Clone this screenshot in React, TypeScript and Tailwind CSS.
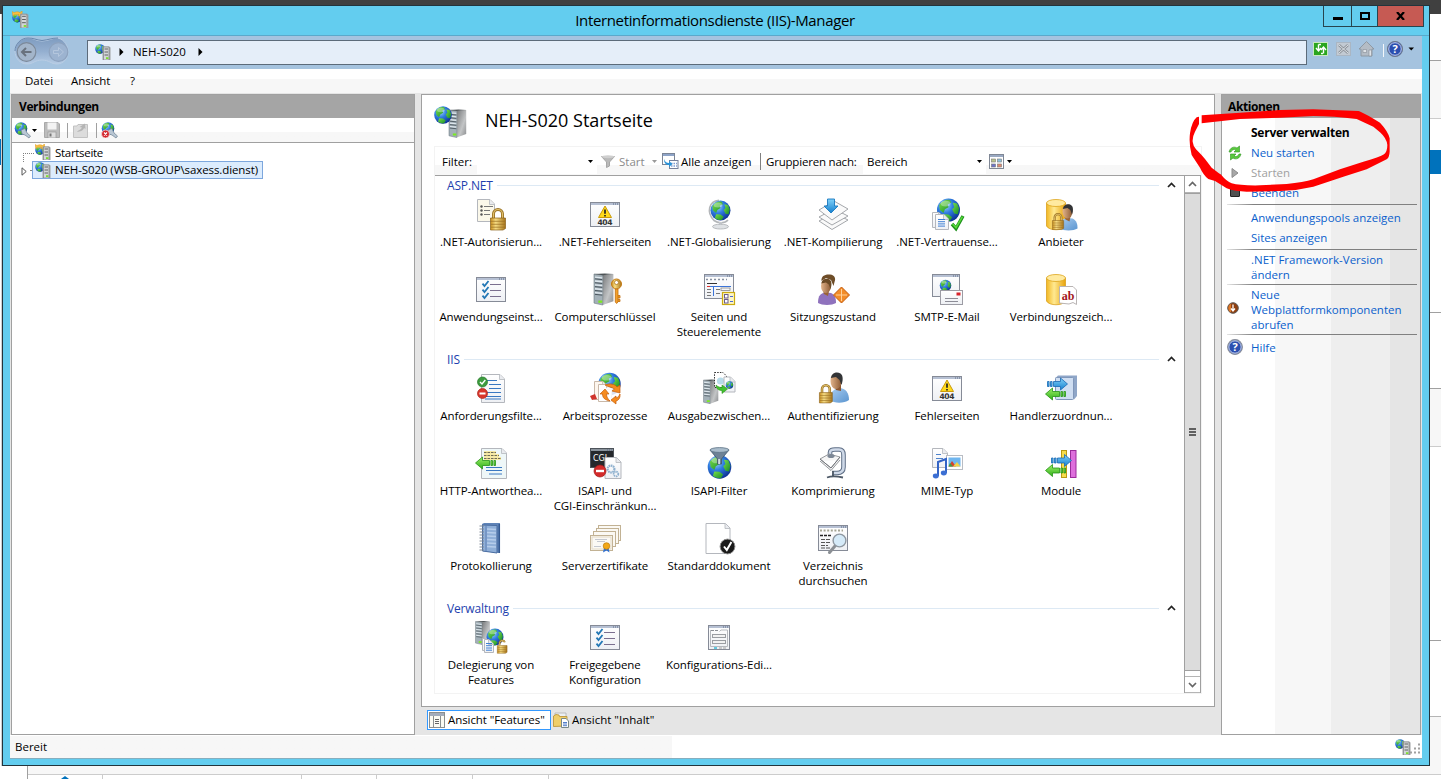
import React from "react";

type P = { x: number; y: number };

/* ---------- drawing primitives ---------- */

const Defs = () => (
  <svg width="0" height="0" className="absolute">
    <defs>
      <radialGradient id="globe" cx="0.35" cy="0.3" r="0.75">
        <stop offset="0" stopColor="#a5dcfd" />
        <stop offset="0.45" stopColor="#2f7ce0" />
        <stop offset="1" stopColor="#0c2f93" />
      </radialGradient>
      <linearGradient id="land" x1="0" y1="0" x2="1" y2="1">
        <stop offset="0" stopColor="#7be04b" />
        <stop offset="1" stopColor="#168a2a" />
      </linearGradient>
      <linearGradient id="side" x1="0" y1="0" x2="1" y2="1">
        <stop offset="0" stopColor="#77797b" />
        <stop offset="0.6" stopColor="#c3c5c6" />
        <stop offset="1" stopColor="#8b8d8f" />
      </linearGradient>
      <linearGradient id="gold" x1="0" y1="0" x2="1" y2="0">
        <stop offset="0" stopColor="#c98f1e" />
        <stop offset="0.35" stopColor="#f6dc83" />
        <stop offset="1" stopColor="#a8741a" />
      </linearGradient>
      <linearGradient id="db" x1="0" y1="0" x2="1" y2="0">
        <stop offset="0" stopColor="#f2b722" />
        <stop offset="0.4" stopColor="#ffe991" />
        <stop offset="1" stopColor="#e8a30c" />
      </linearGradient>
      <linearGradient id="paper" x1="0" y1="0" x2="0" y2="1">
        <stop offset="0" stopColor="#ffffff" />
        <stop offset="1" stopColor="#eef0f4" />
      </linearGradient>
      <linearGradient id="blueArrow" x1="0" y1="0" x2="0" y2="1">
        <stop offset="0" stopColor="#7fd0f8" />
        <stop offset="1" stopColor="#1580cf" />
      </linearGradient>
      <linearGradient id="greenArrow" x1="0" y1="0" x2="0" y2="1">
        <stop offset="0" stopColor="#9df06a" />
        <stop offset="1" stopColor="#2fae17" />
      </linearGradient>
      <linearGradient id="skin" x1="0" y1="0" x2="1" y2="0">
        <stop offset="0" stopColor="#e2b48b" />
        <stop offset="1" stopColor="#8c5a33" />
      </linearGradient>
      <linearGradient id="shirt" x1="0" y1="0" x2="1" y2="1">
        <stop offset="0" stopColor="#a9cdf0" />
        <stop offset="1" stopColor="#5b95d0" />
      </linearGradient>
      <linearGradient id="navShell" x1="0" y1="0" x2="0" y2="1">
        <stop offset="0" stopColor="#7f9cc0" />
        <stop offset="0.5" stopColor="#93aecf" />
        <stop offset="1" stopColor="#b5cbe4" />
      </linearGradient>
    </defs>
  </svg>
);

const Globe = ({ x, y, r }: P & { r: number }) => (
  <g transform={`translate(${x} ${y}) scale(${r / 8})`}>
    <circle r="8" fill="url(#globe)" />
    <path d="M-6.5 -3.5C-4 -7 -1 -7.5 1 -7L2 -5L-0.5 -4L0 -2L-2.5 -0.5L-3.5 2L-6 0Z" fill="url(#land)" />
    <path d="M3 -5L6 -4.5L7.4 -1L6.5 3L4 2.5L2.5 -0.5L4 -2Z" fill="url(#land)" />
    <path d="M-3.5 3L0 3.2L2.5 5L1 7.6C-1 8 -3.5 7 -4.5 6Z" fill="url(#land)" />
    <ellipse cx="-2" cy="-4.5" rx="3.5" ry="2" fill="#fff" opacity="0.35" />
  </g>
);

const Tower = ({ x, y, s = 1 }: P & { s?: number }) => (
  <g transform={`translate(${x} ${y}) scale(${s})`}>
    <path d="M9 1L20 0V28L9 32Z" fill="url(#side)" />
    <path d="M0 0L9 1V32L0 30Z" fill="#a3b0b8" stroke="#65727a" strokeWidth="0.6" />
    <path d="M0 0L11 -0.6L20 0L9 1.2Z" fill="#4d5356" />
    <path d="M1 3.2L8.5 4M1 7.2L8.5 8M1 11.2L8.5 12M1 15.2L8.5 16M1 19.2L8.5 20" stroke="#dfe8ee" strokeWidth="1.4" />
    <path d="M1 5L8.5 5.8M1 9L8.5 9.8M1 13L8.5 13.8M1 17L8.5 17.8M1 21L8.5 21.8" stroke="#47535b" strokeWidth="1" />
    <rect x="4.5" y="27.3" width="4" height="2.4" fill="#7bea22" />
  </g>
);

const Lock = ({ x, y, s = 1, open = false }: P & { s?: number; open?: boolean }) => (
  <g transform={`translate(${x} ${y}) scale(${s})`}>
    <path
      d={open ? "M4 9V5.5A4.2 4.2 0 0 1 12 5" : "M3.5 11V6A4.5 4.5 0 0 1 12.5 6V11"}
      fill="none"
      stroke="#9b7426"
      strokeWidth="3"
    />
    <path
      d={open ? "M4 9V5.5A4.2 4.2 0 0 1 12 5" : "M3.5 11V6A4.5 4.5 0 0 1 12.5 6V11"}
      fill="none"
      stroke="#e3c26c"
      strokeWidth="1.2"
    />
    <path d="M0.5 10H15.5V20.5L13 22H0.5Z" fill="url(#gold)" stroke="#8a611b" strokeWidth="0.7" />
    <path d="M1 13.3H15M1 16.3H15M1 19.2H15" stroke="#9a6f22" strokeWidth="0.7" />
  </g>
);

const Doc = ({
  x,
  y,
  w,
  h,
  fill = "url(#paper)",
  stroke = "#b4b7bd",
}: P & { w: number; h: number; fill?: string; stroke?: string }) => (
  <g transform={`translate(${x} ${y})`}>
    <path
      d={`M0.5 0.5H${w - 5}L${w - 0.5} 5V${h - 0.5}H0.5Z`}
      fill={fill}
      stroke={stroke}
    />
    <path d={`M${w - 5.5} 0.5V5.5H${w - 0.5}`} fill="#e9ebef" stroke={stroke} strokeWidth="0.8" />
  </g>
);

const Win = ({ x, y, w, h, dark = false }: P & { w: number; h: number; dark?: boolean }) => (
  <g transform={`translate(${x} ${y})`}>
    <rect x="0.5" y="0.5" width={w - 1} height={h - 1} fill={dark ? "#25282c" : "url(#paper)"} stroke={dark ? "#4d535a" : "#868b97"} />
    <rect x="1" y="1" width={w - 2} height="2" fill={dark ? "#8a939c" : "#b6c0d3"} />
    <path d={`M${w - 7} 2H${w - 2}`} stroke="#5d6a82" strokeDasharray="1 1" />
  </g>
);

const Person = ({ x, y, body = "url(#shirt)", hair = "#333436" }: P & { body?: string; hair?: string }) => (
  <g transform={`translate(${x} ${y})`}>
    <path d="M0 25C0 17 3 15 8 14.5L13 15C17 17 18 20 18 25C14 27.5 4 27.5 0 25Z" fill={body} />
    <path d="M5 13L11 13L10 18L6 16Z" fill="#9a6336" />
    <ellipse cx="8" cy="8" rx="5" ry="7" fill="url(#skin)" />
    <path d="M3.3 5.5C4 1 8 0 11 1.2C14 2.5 14 7 12.5 11L10.8 6.5L8 4.5Z" fill={hair} />
  </g>
);

const Db = ({ x, y }: P) => (
  <g transform={`translate(${x} ${y})`}>
    <path d="M0.5 4V27C3 32 17 32 19.5 27V4Z" fill="url(#db)" stroke="#d69a12" strokeWidth="0.7" />
    <ellipse cx="10" cy="4" rx="9.5" ry="3.5" fill="#ffeaa0" stroke="#dda41c" strokeWidth="0.8" />
  </g>
);

const RightArrow = ({ x, y }: P) => (
  <path
    transform={`translate(${x} ${y})`}
    d="M0 3.5H1.6V8.5H0ZM3 3.5H4.6V8.5H3ZM6 3.5H13V0L20 6L13 12V8.5H6Z"
    fill="url(#blueArrow)"
    stroke="#1668b4"
    strokeWidth="0.8"
  />
);

const LeftArrow = ({ x, y }: P) => (
  <path
    transform={`translate(${x} ${y})`}
    d="M20 3.5H18.4V8.5H20ZM17 3.5H15.4V8.5H17ZM14 3.5H7V0L0 6L7 12V8.5H14Z"
    fill="url(#greenArrow)"
    stroke="#249315"
    strokeWidth="0.8"
  />
);

const Glyph = ({ children }: { children: React.ReactNode }) => (
  <svg width="32" height="32" viewBox="0 0 32 32" className="block shrink-0 overflow-visible">
    {children}
  </svg>
);

const Error404 = () => (
  <Glyph>
    <Win x={1} y={4} w={30} h={25} />
    <path d="M16 8L22.5 19.5H9.5Z" fill="#ffd91a" stroke="#c99a0a" strokeLinejoin="round" />
    <path d="M16 11.5V15.8M16 17V18.4" stroke="#222" strokeWidth="1.7" />
    <text x="16" y="27.2" textAnchor="middle" fontSize="7.6" fontWeight="700" fontFamily="DejaVu Sans, sans-serif" fill="#333" textLength="15">
      404
    </text>
  </Glyph>
);

const CheckList = () => (
  <Glyph>
    <Win x={1} y={4} w={30} h={25} />
    {[9, 15, 21].map((y) => (
      <g key={y}>
        <path d={`M7.5 ${y + 1.6}L9.5 ${y + 4}L13.5 ${y - 1}`} fill="none" stroke="#2277b5" strokeWidth="1.8" />
        <path d={`M15 ${y + 2.5}H26`} stroke="#7a6f8f" strokeWidth="1" />
      </g>
    ))}
  </Glyph>
);

const icons: Record<string, React.ReactNode> = {
  auth: (
    <Glyph>
      <Doc x={2} y={1} w={18} h={23} fill="#fbf8ea" />
      {[8.5, 12.5, 16.5].map((y) => (
        <g key={y}>
          <circle cx="6.5" cy={y} r="1.2" fill="#555" />
          <path d={`M9 ${y}H${y > 9 ? 15 : 18}`} stroke="#777" />
        </g>
      ))}
      <Lock x={15} y={10} />
    </Glyph>
  ),
  e404: <Error404 />,
  globeStand: (
    <Glyph>
      <path d="M16 2.2C6 3 3 14 11 22.5C15 25.5 22 25.5 25 22" fill="none" stroke="#b3b6b9" strokeWidth="1.6" />
      <Globe x={17.5} y={12.5} r={10} />
      <path d="M16 24H19V28H16Z" fill="#c6c9cc" />
      <ellipse cx="17.5" cy="28.6" rx="8" ry="2.4" fill="#dfe2e5" stroke="#a9adb1" strokeWidth="0.8" />
    </Glyph>
  ),
  compile: (
    <Glyph>
      <g fill="#fafafa" stroke="#9a9da1" strokeWidth="0.9">
        <path d="M2 23L17 15L31 22L15 31.5Z" />
        <path d="M2 19L17 11L31 18L15 27Z" />
        <path d="M2 12L17 3L31 11L15 22Z" />
      </g>
      <path d="M10.5 1H17.5V8H21L14 15L7 8H10.5Z" fill="url(#blueArrow)" stroke="#1a79c0" strokeWidth="0.9" />
    </Glyph>
  ),
  trust: (
    <Glyph>
      <Globe x={17.5} y={12} r={11.5} />
      <Doc x={1} y={14} w={12} h={16} />
      <Doc x={4} y={16} w={14} h={16} />
      <path d="M7 21.5H14M7 23.7H14M7 25.9H14M7 28.1H14" stroke="#3f7fd4" />
      <path d="M21 26L25 30.5L32 18" fill="none" stroke="#1d8f1a" strokeWidth="3.4" />
      <path d="M21.5 26L25 29.6L31.5 18.6" fill="none" stroke="#57d93c" strokeWidth="1.6" />
    </Glyph>
  ),
  provider: (
    <Glyph>
      <Db x={1} y={1} />
      <Person x={14.5} y={5.5} />
      <Lock x={7} y={15} s={0.75} />
    </Glyph>
  ),
  settings: <CheckList />,
  machineKey: (
    <Glyph>
      <Tower x={5} y={1} s={0.97} />
      <circle cx="27.5" cy="11" r="5" fill="url(#gold)" stroke="#c67a12" />
      <circle cx="27.5" cy="9.5" r="2" fill="#fff" stroke="#a86b10" strokeWidth="0.7" />
      <path d="M26.3 16H29V29L27.6 30.5L26.3 29Z M29 22.5H31V25H29M29 26.5H31V28.5H29" fill="#f2a12c" stroke="#c06c0c" strokeWidth="0.8" />
    </Glyph>
  ),
  pages: (
    <Glyph>
      <Win x={1} y={1} w={30} h={25} />
      <path d="M3 6.5H24" stroke="#8790a0" strokeWidth="1.6" strokeDasharray="2 2" />
      <path d="M4 10.5H14" stroke="#333" />
      <path d="M4 13.5H15" stroke="#e03030" />
      <path d="M7 13.5H28M10.5 14V23" stroke="#3c74d8" />
      <path d="M4 16.5H8M4 19.5H8M4 22.5H8M13 16.5H17M13 20.5H17" stroke="#777" />
      <rect x="18" y="15" width="9" height="2.5" fill="none" stroke="#888" strokeWidth="0.8" />
      <rect x="19.5" y="19.5" width="12" height="12" fill="#fdf6c6" stroke="#cbaa10" strokeWidth="1.2" />
      <rect x="21.5" y="21.5" width="3.5" height="3.5" fill="#fff" stroke="#6a5b8f" />
      <rect x="21.5" y="26.5" width="3.5" height="3.5" fill="#fff" stroke="#6a5b8f" />
      <path d="M27 23.5H30M27 28.5H30" stroke="#4b6ad0" />
    </Glyph>
  ),
  session: (
    <Glyph>
      <Person x={1} y={5} body="#8f72bd" hair="#6a4a25" />
      <path d="M4.5 8C4 3 8 1 13 1.5C18 2 19 6 17.5 9L16.5 13L14 7L9 5Z" fill="#6e4d28" />
      <path d="M24.5 14L32.5 22L24.5 30L16.5 22Z" fill="#f28c28" stroke="#c45a0c" />
      <path d="M24.5 16V28M19 22H30" stroke="#ffd09a" />
    </Glyph>
  ),
  smtp: (
    <Glyph>
      <Win x={1} y={1} w={28} h={23} />
      <Globe x={14.5} y={12.5} r={5.8} />
      <rect x="9.5" y="17.5" width="22" height="14" fill="url(#paper)" stroke="#9c9ca4" />
      <rect x="25.5" y="19.5" width="4" height="3" fill="#d8232a" />
      <path d="M14 25.5H27M14 28.5H27" stroke="#8d8d97" />
    </Glyph>
  ),
  connStr: (
    <Glyph>
      <Db x={1} y={1} />
      <path d="M14.5 13.5H28L31.5 17V31.5L28 29.5L24 31L14.5 30Z" fill="#fff" stroke="#b9b4b4" />
      <text x="23" y="26.5" textAnchor="middle" fontSize="12" fontWeight="700" fontFamily="Liberation Serif, serif" fill="#a31420">
        ab
      </text>
    </Glyph>
  ),
  reqFilter: (
    <Glyph>
      <Doc x={6} y={2} w={24} h={29} />
      <path d="M12 8.5H22M14 12.5H26M14 16.5H26M12 20.5H26M10 24.5H26M10 27H26" stroke="#3a78c2" />
      <circle cx="7.5" cy="10" r="5" fill="#3d9b3f" stroke="#277a2a" strokeWidth="0.7" />
      <path d="M5 10L7 12L10.3 8" fill="none" stroke="#fff" strokeWidth="1.4" />
      <circle cx="7.5" cy="21.5" r="5" fill="#d9362b" stroke="#a8221a" strokeWidth="0.7" />
      <path d="M4.5 21.5H10.5" stroke="#fff" strokeWidth="2" />
    </Glyph>
  ),
  worker: (
    <Glyph>
      <Globe x={20.5} y={12} r={11.2} />
      <Doc x={5} y={9} w={14} h={19} fill="#fdf6ee" stroke="#c9b8a8" />
      <Doc x={9} y={12} w={14} h={18} fill="#fff" stroke="#c9b8a8" />
      <path d="M1 24L6 22L8 27L3 28Z" fill="#d0342c" />
      <path d="M16 16L29 15L31 26L22 30L15 25Z" fill="#fff" opacity="0.85" />
      <g fill="#f58b1f" stroke="#c55d08" strokeWidth="0.7">
        <path d="M16 13C21 11 26 12 28 15L31 13V21L23 19L25.5 17C23 15 19 15 16 13Z" />
        <path d="M11 22L16 17L20 22H17.5C17.5 25 19 27 21 29C16 28 13.5 26 13.5 22Z" />
        <path d="M31 22C31.5 26 29.5 28.5 27 29V32L22 28L27 24V26C29 25.5 30 24 31 22Z" />
      </g>
    </Glyph>
  ),
  outCache: (
    <Glyph>
      <Tower x={0.5} y={8} s={0.74} />
      <path d="M11.5 0.5H20L23.5 4V15.5H11.5Z" fill="#fff" stroke="#333" strokeDasharray="1.5 1.2" />
      <circle cx="17.5" cy="9" r="3.6" fill="#b7dcea" />
      <Doc x={20.5} y={4.5} w={12} h={16} />
      <Globe x={26.5} y={13} r={3.8} />
      <path d="M13 13C13 17 16 18.5 19 18.5V21.5L24.5 17L19 13V15.5C17 15.5 15 15 13 13Z" fill="#43c12f" stroke="#27921a" strokeWidth="0.6" />
    </Glyph>
  ),
  authn: (
    <Glyph>
      <path d="M13 28C13 20 17 16.500 22 16C29 16 32 21 32 28C27 31.500 17 31.500 13 28Z" fill="url(#shirt)" />
      <path d="M17 13H24L24 19L19 18Z" fill="#8a5630" />
      <ellipse cx="19" cy="9" rx="5.500" ry="8" fill="url(#skin)" />
      <path d="M13.800 6C15 0.500 20 -0.500 23.500 1.500C26.500 3.500 26 9 24.500 13L22.500 8L19 5Z" fill="#333436" />
      <Lock x={2} y={12} s={0.86} />
    </Glyph>
  ),
  handler: (
    <Glyph>
      <path d="M10.5 6L13 3.5H32V24L29 27.5Z" fill="#8fa6c8" />
      <rect x="10.5" y="5.5" width="18" height="22" rx="1" fill="#cfdef2" stroke="#8097ba" />
      <RightArrow x={2.5} y={6} />
      <LeftArrow x={0.5} y={16} />
    </Glyph>
  ),
  httpResp: (
    <Glyph>
      <Doc x={6} y={1} w={26} h={31} fill="#eef7f8" />
      <path d="M9 5.5H21M9 8.5H24M9 11.5H26" stroke="#f7e58a" strokeWidth="2.6" />
      <path d="M9 5.5H21M9 8.5H24M9 11.5H26" stroke="#6d6b58" strokeDasharray="2.5 1" />
      <path d="M11 20.5H27M11 23.5H27M14 27H27" stroke="#3a78c2" />
      <LeftArrow x={0.5} y={10} />
    </Glyph>
  ),
  isapiCgi: (
    <Glyph>
      <Win x={1} y={1} w={24} h={20} dark />
      <text x="4" y="13.5" fontSize="8" fontFamily="DejaVu Sans, sans-serif" fill="#fff">
        CGI
      </text>
      <Doc x={15.5} y={10} w={17} h={22} />
      <circle cx="22" cy="22" r="3.4" fill="none" stroke="#8fb1cf" strokeWidth="2.2" strokeDasharray="1.6 0.6" />
      <circle cx="27" cy="27" r="2.3" fill="none" stroke="#8fb1cf" strokeWidth="1.8" strokeDasharray="1.4 0.6" />
      <circle cx="11" cy="24" r="6" fill="#d32b2b" stroke="#9f1a1a" strokeWidth="0.7" />
      <path d="M7 24H15" stroke="#fff" strokeWidth="2.4" />
    </Glyph>
  ),
  isapiFilter: (
    <Glyph>
      <Globe x={16.5} y={20} r={11.8} />
      <path d="M7 3L14.5 12V17H18.5V12L26 3Z" fill="#6d8296" stroke="#3e5468" strokeWidth="0.8" />
      <path d="M15.2 12H17V17H15.2Z" fill="#cfd9e2" />
      <ellipse cx="16.5" cy="3" rx="9.5" ry="2.4" fill="#a9bccb" stroke="#5a7184" strokeWidth="0.8" />
    </Glyph>
  ),
  compress: (
    <Glyph>
      <path d="M13 8V5.500C13 3 15 2.500 18 2.500H22C26 2.500 26.500 5 26.500 8V20C26.500 24 24 26 20 26H15" fill="none" stroke="#5f6f86" strokeWidth="4.600" />
      <path d="M13 8V5.500C13 3 15 2.500 18 2.500H22C26 2.500 26.500 5 26.500 8V20C26.500 24 24 26 20 26H15" fill="none" stroke="#cfd9e8" strokeWidth="2.600" />
      <path d="M3 12L12 7L23 10L14 21Z M3 14L14 23.5L23 13" fill="#f5f5f5" stroke="#8a8d92" strokeWidth="0.9" />
      <path d="M3 12L14 21L23 10" fill="none" stroke="#6f7277" strokeWidth="0.9" />
      <ellipse cx="14" cy="9" rx="3.6" ry="2" fill="#7c8795" />
      <path d="M16 24V30M10 30.500C14 29 19 29 26 30.500" stroke="#4e5967" strokeWidth="1.800" fill="none" />
    </Glyph>
  ),
  mime: (
    <Glyph>
      <Doc x={1} y={1} w={16} h={20} />
      <path d="M5 7.5H10M5 11.5H12" stroke="#4d82cc" />
      <rect x="15.5" y="8.5" width="16" height="14" fill="#fff" stroke="#b9bdc4" />
      <rect x="17.5" y="10.5" width="12" height="9" fill="#6fb6ef" />
      <path d="M17.5 19.5L21 14L25 19.5Z" fill="#d8432c" />
      <path d="M22 19.5L26 15L29.5 19.5Z" fill="#f3d44a" />
      <path d="M17.5 19.5L19 16L22 19.5Z" fill="#3da046" />
      <path d="M7 29V15L15 12V26" fill="none" stroke="#3263c6" strokeWidth="2" />
      <ellipse cx="4.8" cy="29" rx="3" ry="2.4" fill="#3c6fd3" />
      <ellipse cx="12.8" cy="26" rx="3" ry="2.4" fill="#3c6fd3" />
    </Glyph>
  ),
  modules: (
    <Glyph>
      <rect x="16.5" y="3.5" width="5" height="27" fill="#f6dc4c" stroke="#b99a12" />
      <rect x="25.5" y="3.5" width="5.5" height="27" fill="#dd6fdc" stroke="#9b2b9b" />
      <RightArrow x={6.5} y={7.5} />
      <LeftArrow x={0.5} y={17.5} />
    </Glyph>
  ),
  logging: (
    <Glyph>
      <path d="M7 2L9 1H25L24 31L7 29Z" fill="#5f84b8" />
      <path d="M7.5 3L22 3.5V31L7.5 29Z" fill="#8fafd8" stroke="#4a6da1" />
      <path d="M11 3.5V29.5" stroke="#5c7fb3" />
      <path d="M12 7L21 7.5M12 10.5L21 11M12 14L21 14.5M12 17.5L21 18M12 21L21 21.5M12 24.5L21 25" stroke="#b6cdeb" strokeWidth="1.6" />
      <path d="M4.5 4H9M4.5 7H9M4.5 10H9M4.5 13H9M4.5 16H9M4.5 19H9M4.5 22H9M4.5 25H9M4.5 28H9" stroke="#7d8794" />
      <path d="M24.3 2V31" stroke="#355a92" strokeWidth="1.5" />
    </Glyph>
  ),
  certs: (
    <Glyph>
      {[
        [9.5, 3.5],
        [7.5, 6.5],
        [4.5, 9.5],
        [1.5, 13.5],
      ].map(([x, y]) => (
        <rect key={x} x={x} y={y} width="22" height="15" fill="#fbf9f4" stroke="#c2b294" />
      ))}
      <rect x="3" y="15" width="19" height="12" fill="none" stroke="#e3dac6" />
      <path d="M6 17.5H18M8 19.500H16M5 24.500H12" stroke="#c5c8cf" />
      <path d="M15 26L14 30.5L17.5 28.5L20.5 30.5L19.5 26Z" fill="#2f6fd0" />
      <circle cx="17.5" cy="24" r="3.3" fill="#f2a818" stroke="#c07d0c" strokeWidth="0.7" />
    </Glyph>
  ),
  defaultDoc: (
    <Glyph>
      <Doc x={2.5} y={1} w={25} h={31} fill="#fff" />
      <circle cx="24.5" cy="24.5" r="7.4" fill="#1a1a1a" stroke="#8b8b8b" />
      <path d="M21 24.5L23.8 28L28.4 20" fill="none" stroke="#fff" strokeWidth="2" />
    </Glyph>
  ),
  dirBrowse: (
    <Glyph>
      <Win x={1} y={3} w={30} h={26} />
      <path d="M3 8.5H26" stroke="#a5a594" strokeWidth="2" strokeDasharray="2 1.6" />
      <path d="M3 13.5H15" stroke="#222" strokeWidth="1.3" strokeDasharray="3 1" />
      <path d="M4 17.5H13M4 20.5H13M4 23.5H11M4 26H14" stroke="#555" strokeDasharray="4 1" />
      <path d="M18 24L12.5 30.5" stroke="#8b8f94" strokeWidth="3" strokeLinecap="round" />
      <circle cx="22.5" cy="18.5" r="6.4" fill="#d5eaf8" stroke="#8e97a0" strokeWidth="1.4" />
    </Glyph>
  ),
  delegation: (
    <Glyph>
      <Tower x={0.5} y={0.5} s={0.72} />
      <Globe x={20} y={16} r={8.5} />
      <Doc x={7} y={17} w={9} h={13} />
      <Doc x={9} y={18} w={10} h={14} />
      <path d="M11 22.5H17M11 24.7H17M11 27H17M11 29.2H17" stroke="#3f7fd4" />
      <Lock x={22} y={18} s={0.65} open />
    </Glyph>
  ),
  shared: <CheckList />,
  cfgEditor: (
    <Glyph>
      <Win x={5} y={4} w={22} h={25} />
      <path d="M7.5 9V25.5M7.5 25.5H24.5V9H18L16.5 10.5" fill="none" stroke="#b6b9be" />
      <path d="M8 9.5H16" stroke="#8b8f95" strokeWidth="1" strokeDasharray="3 1" />
      <rect x="9.5" y="13.500" width="13" height="3" fill="#f1f1f1" stroke="#9a9da2" />
      <rect x="9.5" y="19.500" width="13" height="3" fill="#f1f1f1" stroke="#9a9da2" />
      <path d="M11 27H14" stroke="#22b7d6" strokeWidth="1.4" />
      <path d="M16 27H24" stroke="#bbb" strokeWidth="1.4" strokeDasharray="3 1" />
    </Glyph>
  ),
};

/* ---------- 16px icons ---------- */

const ServerIcon = ({ start = false, size = 16 }: { start?: boolean; size?: number }) => (
  <svg width={size} height={size} viewBox="0 0 16 16" className="block shrink-0">
    <Globe x={5} y={start ? 6 : 5} r={4.8} />
    {start && (
      <path d="M0 0.500L2 1.500C4 0.500 6 0.500 7.500 1.500L9.500 0V5L5.500 4.500L6.500 3.200H2L1 5Z" fill="#f9c043" stroke="#e09a1a" strokeWidth="0.5" />
    )}
    <path d="M7.5 2.5H14L15.5 3.5V16H7.5Z" fill="#a0a2a4" />
    <rect x="8.500" y="3" width="5.500" height="13" fill="#d3d6d8" stroke="#85888a" strokeWidth="0.7" />
    <path d="M9.500 5H13M9.500 8H13M9.500 11H13" stroke="#55585a" strokeWidth="0.9" />
    <rect x="11" y="13.3" width="2.4" height="1.6" fill="#74e01c" />
  </svg>
);

const BigServer = () => (
  <svg width="33" height="33" viewBox="0 0 33 33" className="block shrink-0">
    <Tower x={15} y={4} s={0.86} />
    <Globe x={9} y={9} r={8.800} />
  </svg>
);

const ConnectIcon = ({ remove = false }: { remove?: boolean }) => (
  <svg width="17" height="17" viewBox="0 0 17 17" className="block shrink-0">
    <Globe x={7} y={6.5} r={6.3} />
    <path d="M7 8L11 6.5L13 11L16.5 14L15 16L11 13L8 12Z" fill="#b9c7d4" stroke="#6b7f91" strokeWidth="0.7" />
    {remove && (
      <g>
        <circle cx="4.5" cy="12" r="4" fill="#d3242b" stroke="#fff" strokeWidth="0.6" />
        <path d="M3 10.5L6 13.5M6 10.5L3 13.5" stroke="#fff" strokeWidth="1.2" />
      </g>
    )}
  </svg>
);

const Caret = ({ color = "#000" }: { color?: string }) => (
  <svg width="5" height="3" viewBox="0 0 5 3" className="block shrink-0">
    <path d="M0 0H5L2.5 3Z" fill={color} />
  </svg>
);

const CrumbArrow = () => (
  <svg width="5" height="8" viewBox="0 0 5 8" className="block shrink-0">
    <path d="M0.5 0L4.5 4L0.5 8Z" fill="#000" />
  </svg>
);

const HelpIcon = () => (
  <svg width="16" height="16" viewBox="0 0 16 16" className="block shrink-0">
    <circle cx="8" cy="8" r="7.4" fill="#2b4fb0" stroke="#8c9099" strokeWidth="1.1" />
    <circle cx="8" cy="8" r="6.2" fill="none" stroke="#d9e0f2" strokeWidth="0.9" />
    <text x="8" y="12" textAnchor="middle" fontSize="11" fontWeight="700" fontFamily="Open Sans, sans-serif" fill="#fff">
      ?
    </text>
  </svg>
);

/* ---------- window chrome ---------- */

const TitleBar = () => (
  <div className="flex h-[30px] items-start border-b border-[#5aa9cb] pl-[9px]">
    <div className="pt-[5px]">
      <ServerIcon start size={17} />
    </div>
    <div className="flex-1 pt-[4px] pl-[78px] text-center text-[15px] leading-[20px] tracking-[-0.35px]">
      Internetinformationsdienste (IIS)-Manager
    </div>
    <div className="mr-[5px] flex h-[21px] border border-t-0 border-[#27454f]">
      <div className="flex w-[28px] justify-center border-r border-[#27454f] pt-[11px]">
        <div className="h-[3px] w-[10px] bg-black" />
      </div>
      <div className="flex w-[26px] justify-center border-r border-[#27454f] pt-[6px]">
        <div className="h-[8px] w-[10px] border-2 border-black" />
      </div>
      <div className="flex w-[45px] justify-center bg-[#c65a53] pt-[6px]">
        <svg width="9" height="8" viewBox="0 0 9 8">
          <path d="M1 0L8 8M8 0L1 8" stroke="#000" strokeWidth="2.2" />
        </svg>
      </div>
    </div>
  </div>
);

const NavBar = () => (
  <div className="flex h-[33px] items-center bg-[#a5c3df]">
    <svg width="56" height="28" viewBox="0 0 56 28" className="-mt-[3px] ml-[4px] block">
      <path
        d="M14 1C20 1 22 4 28 4C34 4 38 1 44 1C51 3 54 9 54 15C54 22 49 27 43 27C37 27 35 23 28 23C21 23 19 27 13 27C6 27 1 21 1 14C1 7 7 1 14 1Z"
        fill="url(#navShell)"
        stroke="#b9cde4"
        strokeWidth="1"
      />
      <path d="M1 14C1 7 7 1 14 1C20 1 22 3 28 3.5C34 3 38 1 44 1" fill="none" stroke="#6987ad" />
      <circle cx="12.500" cy="15" r="9.3" fill="#a3b5ca" stroke="#7c8999" strokeWidth="1.2" />
      <path d="M17.500 15H8.500M12 11L8 15L12 19" fill="none" stroke="#69727e" strokeWidth="2" />
      <circle cx="44.500" cy="15" r="9.3" fill="#9cb3d0" stroke="#8da2be" strokeWidth="1.2" />
      <path d="M39.500 13.5H44.500V10.5L49.500 15L44.500 19.5V16.5H39.500Z" fill="none" stroke="#b4c6dd" />
    </svg>
    <div className="ml-[17px] flex h-[25px] w-[1220px] items-center border border-[#5c6b7a] bg-[#e5eef9] pb-[2px] pl-[7px]">
      <ServerIcon size={16} />
      <span className="ml-[8px]"><CrumbArrow /></span>
      <span className="ml-[9px] w-[54px] leading-[15px] tracking-[-0.050px] whitespace-nowrap">NEH-S020</span>
      <span className="ml-[11px]"><CrumbArrow /></span>
    </div>
    <svg width="112" height="20" viewBox="0 0 112 20" className="-mt-[7px] ml-[2px] block">
      <rect x="4.5" y="3.5" width="14" height="13" fill="#2aa51f" stroke="#c7e8c0" />
      <path d="M9.5 5.5H12M9.5 5.5V11M7 9L9.5 12L12 9M14 14.5H12M14.5 14.5V9M12 11L14.5 8L17 11" fill="none" stroke="#fff" strokeWidth="1.4" />
      <rect x="27.5" y="3.5" width="14" height="13" fill="#c2cad3" stroke="#aab6c3" />
      <path d="M30 6L39 14M39 6L30 14" stroke="#8c9299" strokeWidth="2.4" />
      <path d="M30 6L39 14M39 6L30 14" stroke="#dde2e7" strokeWidth="1" />
      <path d="M50 10L57.5 2.5L65 10H63V17H52V10Z" fill="#b4bcc5" stroke="#8b949e" strokeWidth="0.9" />
      <path d="M60 11H62.500V17H60ZM54 10.500H57.5V13.500H54Z" fill="#dfe3e7" stroke="#848c95" strokeWidth="0.6" />
      <path d="M74.500 5V18" stroke="#f4f7fa" />
      <circle cx="86" cy="10" r="7.600" fill="#2b4fb0" stroke="#6f7a8c" />
      <circle cx="86" cy="10" r="6.300" fill="none" stroke="#d9e0f2" strokeWidth="0.9" />
      <text x="86" y="14" textAnchor="middle" fontSize="11" fontWeight="700" fontFamily="Open Sans, sans-serif" fill="#fff">
        ?
      </text>
      <path d="M99.500 8.500H105L102.250 11.500Z" fill="#000" />
    </svg>
  </div>
);

const MenuBar = () => (
  <div className="flex h-[24px] items-center border-t-[10px] border-white bg-[#f7f7f7]">
    <div className="-mt-[12px] flex pl-[15px] leading-[15px]">
      <span className="w-[46px]">Datei</span>
      <span className="w-[59px]">Ansicht</span>
      <span>?</span>
    </div>
  </div>
);

const Separator = () => <div className="h-[15px] w-px bg-[#a0a0a0]" />;

const Connections = () => (
  <div className="flex h-[641px] w-[404px] flex-col border border-[#a0a0a0] bg-white">
    <div className="h-[23px] shrink-0 bg-[#a5a5a5] pl-[7px] text-[12px] leading-[24px] font-bold tracking-[-0.4px]">Verbindungen</div>
    <div className="flex h-[25px] shrink-0 items-center border-b border-[#a0a0a0] bg-linear-to-b from-white from-[58%] to-[#f7f7f7] to-[58%]">
      <div className="ml-[2px] flex items-center"><ConnectIcon /></div>
      <div className="ml-[1px]"><Caret /></div>
      <svg width="16" height="16" viewBox="0 0 16 16" className="ml-[7px] block">
        <path d="M0.500 0.500H14L15.500 2V15.500H0.500Z" fill="#bcbcbc" stroke="#a9a9a9" />
        <rect x="3.500" y="0.500" width="9" height="7" fill="#f3f3f3" />
        <rect x="4" y="10" width="8" height="6" fill="#dedede" stroke="#999" strokeWidth="0.700" />
        <rect x="5.500" y="11.500" width="2" height="3" fill="#777" />
      </svg>
      <div className="ml-[7px]"><Separator /></div>
      <svg width="15" height="15" viewBox="0 0 15 15" className="ml-[5px] block">
        <path d="M0.500 3H4L5 1.500H14.500V14.500H0.500Z" fill="#dcdcdc" stroke="#c2c2c2" />
        <path d="M4 9C5 7 8 7 9 4.500L6.500 4L12 0.500L12.500 6L11 5C10 8 7 8.500 4 9Z" fill="#b5b5b5" />
      </svg>
      <div className="ml-[8px]"><Separator /></div>
      <div className="ml-[4px]"><ConnectIcon remove /></div>
    </div>
    <div className="flex flex-col">
      <div className="flex h-[18px] items-center pl-[11px]">
        <div className="mt-[10px] h-[9px] w-[11px] border-t border-l border-dotted border-[#808080]" />
        <div className="ml-px"><ServerIcon start /></div>
        <span className="ml-[4px] leading-[15px] tracking-[-0.300px]">Startseite</span>
      </div>
      <div className="flex h-[18px] items-center pl-[9px]">
        <svg width="6" height="9" viewBox="0 0 6 9" className="mt-[3px] block">
          <path d="M1 0.800L5.200 4.500L1 8.200Z" fill="#fff" stroke="#555" />
        </svg>
        <div className="ml-[3px] w-[2px] border-t border-dotted border-[#808080]" />
        <div className="flex h-[18px] w-[231px] items-center border border-[#7da7dd] bg-[#dcecfd] pl-[2px]">
          <ServerIcon />
          <span className="-mt-px ml-[4px] leading-[15px] tracking-[-0.100px] whitespace-nowrap">NEH-S020 (WSB-GROUP\saxess.dienst)</span>
        </div>
      </div>
    </div>
  </div>
);

/* ---------- feature view ---------- */

const groups: { name: string; items: [string, string[]][] }[] = [
  {
    name: "ASP.NET",
    items: [
      ["auth", [".NET-Autorisierun..."]],
      ["e404", [".NET-Fehlerseiten"]],
      ["globeStand", [".NET-Globalisierung"]],
      ["compile", [".NET-Kompilierung"]],
      ["trust", [".NET-Vertrauense..."]],
      ["provider", ["Anbieter"]],
      ["settings", ["Anwendungseinst..."]],
      ["machineKey", ["Computerschlüssel"]],
      ["pages", ["Seiten und", "Steuerelemente"]],
      ["session", ["Sitzungszustand"]],
      ["smtp", ["SMTP-E-Mail"]],
      ["connStr", ["Verbindungszeich..."]],
    ],
  },
  {
    name: "IIS",
    items: [
      ["reqFilter", ["Anforderungsfilte..."]],
      ["worker", ["Arbeitsprozesse"]],
      ["outCache", ["Ausgabezwischen..."]],
      ["authn", ["Authentifizierung"]],
      ["e404", ["Fehlerseiten"]],
      ["handler", ["Handlerzuordnun..."]],
      ["httpResp", ["HTTP-Antworthea..."]],
      ["isapiCgi", ["ISAPI- und", "CGI-Einschränkun..."]],
      ["isapiFilter", ["ISAPI-Filter"]],
      ["compress", ["Komprimierung"]],
      ["mime", ["MIME-Typ"]],
      ["modules", ["Module"]],
      ["logging", ["Protokollierung"]],
      ["certs", ["Serverzertifikate"]],
      ["defaultDoc", ["Standarddokument"]],
      ["dirBrowse", ["Verzeichnis", "durchsuchen"]],
    ],
  },
  {
    name: "Verwaltung",
    items: [
      ["delegation", ["Delegierung von", "Features"]],
      ["shared", ["Freigegebene", "Konfiguration"]],
      ["cfgEditor", ["Konfigurations-Edi..."]],
    ],
  },
];

const Chevron = ({ down = false, color = "#222" }: { down?: boolean; color?: string }) => (
  <svg width="9" height="6" viewBox="0 0 9 6" className="block">
    <path d={down ? "M1 1L4.500 4.500L8 1" : "M1 5L4.500 1.500L8 5"} fill="none" stroke={color} strokeWidth="1.700" />
  </svg>
);

const FeatureList = () => (
  <div className="w-[749px] shrink-0 overflow-hidden">
    {groups.map((g, i) => (
      <div key={g.name}>
        <div className={i === 0 ? "flex h-[21px] items-center pb-[3px] pl-[12px]" : "flex h-[24px] items-center pl-[12px]"}>
          <span className="text-[12px] leading-[15px] tracking-[-0.150px] text-[#1e3fae]">{g.name}</span>
          <div className="ml-[4px] h-px flex-1 bg-[#dde9f4]" />
          <div className="mr-[8px] ml-[8px]"><Chevron /></div>
        </div>
        <div className="-ml-px grid grid-cols-[repeat(6,114px)]">
          {g.items.map(([icon, lines]) => (
            <div key={lines[0]} className="flex h-[75px] flex-col items-center pt-px">
              {icons[icon]}
              <div className="mt-[4px] text-center leading-[15px] tracking-[-0.080px] whitespace-nowrap">
                {lines.map((l) => (
                  <div key={l}>{l}</div>
                ))}
              </div>
            </div>
          ))}
        </div>
      </div>
    ))}
  </div>
);

const ScrollBar = () => (
  <div className="flex w-[17px] shrink-0 flex-col border-x border-[#a0a0a0] bg-white">
    <div className="flex h-[17px] items-center justify-center border-b border-[#b5b5b5]"><Chevron color="#666" /></div>
    <div className="flex h-[478px] flex-col items-center justify-center gap-px border-y border-[#a0a0a0] bg-[#dcdcdc]">
      <div className="h-[2px] w-[7px] bg-[#606060]" />
      <div className="h-[2px] w-[7px] bg-[#606060]" />
      <div className="h-[2px] w-[7px] bg-[#606060]" />
    </div>
    <div className="h-[5px]" />
    <div className="flex h-[17px] items-center justify-center border-y border-[#b5b5b5]"><Chevron down color="#666" /></div>
  </div>
);

const FilterBar = () => (
  <div className="flex h-[30px] items-center border-t border-b border-t-[#f3f3f3] border-b-[#a0a0a0] bg-linear-to-b from-white from-[63%] to-[#f7f7f7] to-[63%] leading-[15px]">
    <div className="w-[42px] pl-[7px]">Filter:</div>
    <div className="flex h-[26px] w-[120px] items-center justify-end bg-white pr-[4px]"><Caret /></div>
    <svg width="14" height="13" viewBox="0 0 14 13" className="ml-[4px] block">
      <path d="M0.500 1.500L5.500 7V12.500L8.500 11V7L13.500 1.500Z" fill="#b9b9b9" stroke="#a5a5a5" />
      <ellipse cx="7" cy="1.800" rx="6.500" ry="1.500" fill="#cfcfcf" />
    </svg>
    <span className="ml-[4px] w-[33px] text-[#8a8a8a]">Start</span>
    <Caret color="#999" />
    <svg width="17" height="16" viewBox="0 0 17 16" className="ml-[5px] block">
      <rect x="0.500" y="0.500" width="12" height="11" fill="#fff" stroke="#7b8596" />
      <rect x="1" y="1" width="11" height="2" fill="#8ea4c8" />
      <rect x="7.500" y="7.500" width="8.500" height="8" fill="#fff" stroke="#76809a" />
      <path d="M9 10.500H15M9 13H15" stroke="#7f9cd0" strokeWidth="1.300" strokeDasharray="1.500 1" />
      <path d="M2 6C2 10 4 12 7 12V14L10.500 11L7 8V10C5 10 3 9 2 6Z" fill="#2b93d8" />
    </svg>
    <span className="ml-[2px] w-[79px] whitespace-nowrap">Alle anzeigen</span>
    <div className="h-[17px] w-px bg-[#808080]" />
    <span className="ml-[5px] w-[97px] tracking-[-0.200px] whitespace-nowrap">Gruppieren nach:</span>
    <div className="flex h-[26px] w-[123px] items-center justify-between bg-white pr-[4px] pl-[4px]">
      <span className="pt-px">Bereich</span>
      <Caret />
    </div>
    <svg width="15" height="15" viewBox="0 0 15 15" className="ml-[3px] block">
      <rect x="0.500" y="0.500" width="14" height="14" fill="#fff" stroke="#7f8795" />
      <rect x="1" y="1" width="13" height="2" fill="#9aa9c2" />
      <rect x="2.500" y="5" width="4" height="3" fill="#b9c48a" stroke="#777" strokeWidth="0.600" />
      <rect x="8.500" y="5" width="4" height="3" fill="#8cc0dd" stroke="#777" strokeWidth="0.600" />
      <rect x="2.500" y="10" width="4" height="3" fill="#6d74c8" stroke="#777" strokeWidth="0.600" />
      <rect x="8.500" y="10" width="4" height="3" fill="#e08a70" stroke="#777" strokeWidth="0.600" />
    </svg>
    <div className="ml-[3px]"><Caret /></div>
  </div>
);

const Workspace = () => (
  <div className="ml-[6px] flex w-[794px] flex-col">
    <div className="h-[613px] border border-[#a0a0a0] bg-white pr-[12px] pl-[12px]">
      <div className="flex h-[51px] items-start pt-[11px]">
        <BigServer />
        <h1 className="ml-[18px] pt-[2px] text-[18px] leading-[24px] tracking-[0px]">NEH-S020 Startseite</h1>
      </div>
      <div className="h-[548px] border-r border-b border-l border-[#f3f3f3]">
        <FilterBar />
        <div className="flex h-[517px]">
          <FeatureList />
          <ScrollBar />
        </div>
      </div>
    </div>
    <div className="flex pt-[3px] pl-[6px] leading-[15px]">
      <div className="flex h-[20px] w-[124px] items-center border border-[#3399ff] bg-white pl-px">
        <svg width="16" height="16" viewBox="0 0 16 16" className="block shrink-0">
          <rect x="0.500" y="0.500" width="15" height="15" fill="#fbfbf3" stroke="#8a8f8f" />
          <rect x="1" y="1" width="14" height="3" fill="#a3adbb" />
          <path d="M4.500 4V15M11.500 4V15" stroke="#8a8f8f" />
          <path d="M6 7.500H10M6 9.500H10M6 11.500H10" stroke="#666" />
        </svg>
        <span className="-mt-px ml-[3px] tracking-[-0.080px] whitespace-nowrap">Ansicht "Features"</span>
      </div>
      <div className="ml-[2px] flex h-[20px] items-center">
        <svg width="16" height="16" viewBox="0 0 16 16" className="block shrink-0">
          <path d="M2 1H13V13H2Z" fill="#eceff2" stroke="#aaa" strokeWidth="0.700" />
          <path d="M0.500 4L3 2.500L6 3L6.500 4.500H14V14L0.500 14.500Z" fill="#efce6a" stroke="#b98f2c" strokeWidth="0.800" />
          <path d="M8.500 6.500H13L15.500 9V15.500H8.500Z" fill="#fff" stroke="#788" />
          <path d="M10 10.500H14M10 12H14M10 13.700H14" stroke="#3f6fc4" strokeWidth="0.900" />
        </svg>
        <span className="-mt-px ml-[3px]">Ansicht "Inhalt"</span>
      </div>
    </div>
  </div>
);

/* ---------- actions ---------- */

const Rule = () => <div className="mr-[3px] ml-[5px] h-px bg-linear-to-r from-[#e4e4e4] to-[#808080] to-[14%]" />;

const Action = ({
  icon,
  lines,
  className = "text-[#0b5fcc]",
}: {
  icon?: React.ReactNode;
  lines: string[];
  className?: string;
}) => (
  <div className="flex items-center">
    <div className="flex w-[29px] justify-center pr-[4px]">{icon}</div>
    <div className={className}>
      {lines.map((l) => (
        <div key={l} className="leading-[15px] whitespace-nowrap">
          {l}
        </div>
      ))}
    </div>
  </div>
);

const Actions = () => (
  <div className="ml-[6px] flex h-[641px] w-[200px] flex-col border border-[#a0a0a0] bg-[linear-gradient(to_right,#ffffff_53px,#f7f7f7_53px,#f7f7f7_109px,#eeeeee_109px,#eeeeee_168px,#e5e5e5_168px)]">
    <div className="h-[23px] bg-[#a5a5a5] pl-[6px] text-[12px] leading-[24px] font-bold tracking-[-0.400px]">Aktionen</div>
    <div className="flex h-[86px] flex-col pt-[7px]">
      <div className="h-[20px]">
        <Action lines={["Server verwalten"]} className="text-[12px] font-bold tracking-[-0.250px]" />
      </div>
      <div className="h-[20px]">
        <Action
          lines={["Neu starten"]}
          icon={
            <svg width="14" height="16" viewBox="0 0 14 16" className="-mb-px block">
              <path d="M1 7C2 2.500 6 1 9 3L11.500 1V7H6L8 5C6 4 4 4.500 3 7Z" fill="#58c93c" stroke="#2f9422" strokeWidth="0.600" />
              <path d="M13 9C12 13.500 8 15 5 13L2.500 15V9H8L6 11C8 12 10 11.500 11 9Z" fill="#58c93c" stroke="#2f9422" strokeWidth="0.600" />
            </svg>
          }
        />
      </div>
      <div className="h-[20px]">
        <Action
          lines={["Starten"]}
          className="text-[#a0a0a0]"
          icon={
            <svg width="8" height="10" viewBox="0 0 8 10" className="block">
              <path d="M1 0.500L7 5L1 9.500Z" fill="#a8a8a8" stroke="#8c8c8c" />
            </svg>
          }
        />
      </div>
      <div className="h-[19px]">
        <Action lines={["Beenden"]} icon={<div className="h-[9px] w-[10px] rounded-[1px] border border-[#222] bg-[#505050]" />} />
      </div>
    </div>
    <Rule />
    <div className="flex h-[44px] flex-col gap-[5px] pt-[5px]">
      <Action lines={["Anwendungspools anzeigen"]} />
      <Action lines={["Sites anzeigen"]} />
    </div>
    <Rule />
    <div className="h-[34px] pt-[2px]">
      <Action lines={[".NET Framework-Version", "ändern"]} />
    </div>
    <Rule />
    <div className="h-[49px] pt-[2px]">
      <Action
        lines={["Neue", "Webplattformkomponenten", "abrufen"]}
        icon={
          <svg width="12" height="12" viewBox="0 0 12 12" className="mr-[3px] mb-[4px] block">
            <circle cx="6" cy="6" r="5.300" fill="#8e3f10" stroke="#5d5a58" />
            <path d="M4 1.500A5 5 0 0 0 4 10.500Z" fill="#e07a28" />
            <path d="M6 2.500V8.500M4 6.500L6 9L8 6.500" fill="none" stroke="#fff" strokeWidth="1.300" />
          </svg>
        }
      />
    </div>
    <Rule />
    <div className="pt-[4px]">
      <Action lines={["Hilfe"]} icon={<HelpIcon />} />
    </div>
  </div>
);

const StatusBar = () => (
  <div className="flex h-[23px] items-center border-t border-white bg-linear-to-r from-[#f7f7f7] from-[662px] to-white to-[662px] pl-[5px]">
    <span className="-mt-px leading-[15px]">Bereit</span>
    <div className="ml-auto flex items-end pr-[2px]">
      <ServerIcon />
      <svg width="10" height="12" viewBox="0 0 10 12" className="-ml-px block">
        <path d="M8 1.500H10M4 5.500H6M8 5.500H10M0 9.500H2M4 9.500H6M8 9.500H10" stroke="#a0a0a0" strokeWidth="2" />
      </svg>
    </div>
  </div>
);

/* ---------- desktop ---------- */

const Desktop = () => (
  <div className="flex h-[779px] w-[1441px] flex-col bg-white">
    <div className="h-[14px] shrink-0 bg-[#404040]" />
    <div className="flex h-[752px] shrink-0 justify-between">
      <div className="w-[2px] border-r border-[#d0d0d0] pt-[125px]">
        <div className="h-[26px] bg-[#0072bc]" />
      </div>
      <div className="flex w-[12px] flex-col">
        <div className="h-[47px] border-b border-[#a0a0a0]" />
        <div className="h-[58px] border-b border-[#cccccc] bg-[#f7f7f7]" />
        <div className="h-[31px]" />
        <div className="h-[24px] bg-[#0072bc]" />
        <div className="h-[139px] border-b border-[#a0a0a0]" />
        <div className="h-[76px] border-b border-[#a0a0a0]" />
        <div className="h-[58px] border-b border-[#cccccc] bg-[#f7f7f7]" />
        <div className="h-[194px] border-b border-[#a0a0a0]" />
        <div className="h-[76px] border-b border-[#b5b5b5]" />
        <div className="flex-1 bg-[#f7f7f7]" />
      </div>
    </div>
    <div className="ml-[27px] flex h-[13px] flex-col border-l border-[#a0a0a0]">
      <div className="h-[9px] border-b border-[#cccccc] bg-[#f7f7f7]" />
      <div className="flex h-[4px]">
        <div className="flex w-[75px] items-end justify-center border-r border-[#cccccc]">
          <svg width="8" height="3" viewBox="0 0 8 3">
            <path d="M0 3L4 0L8 3Z" fill="#0072bc" />
          </svg>
        </div>
        <div className="w-[199px] border-r border-[#cccccc]" />
        <div className="w-[75px] border-r border-[#cccccc]" />
        <div className="w-[96px] border-r border-[#cccccc]" />
        <div className="w-[76px] border-r border-[#cccccc]" />
      </div>
    </div>
  </div>
);

const RedMark = () => (
  <svg width="201" height="80" viewBox="30 330 603 240" className="pointer-events-none absolute top-[110px] left-[1190px] overflow-visible">
    <path
      fillRule="evenodd"
      fill="#fe0000"
      d="M65 346L180 338L300 330L400 328L535 333Q545 335 600 368Q625 395 629 415V455Q628 472 620 478L560 508L490 530L400 560Q350 572 300 573L200 575Q165 575 140 565L105 543L85 537Q70 525 60 503L35 465Q26 430 30 400Q35 365 50 352L57 350V372L45 395Q37 410 38 425Q40 440 48 448Q65 465 75 477L95 503Q115 518 122 523Q140 545 155 550Q180 557 240 556L320 552Q370 547 400 538L480 508L550 485Q600 472 612 463Q622 455 622 435Q620 415 600 397L580 380L530 357Q460 348 400 348L300 353L180 357L65 370Z"
    />
  </svg>
);

export default function App() {
  return (
    <div className="relative h-[779px] w-[1441px] overflow-hidden font-['Open_Sans','Noto_Sans',sans-serif] text-[11.5px] text-black">
      <Defs />
      <Desktop />
      <div className="absolute top-[5px] left-[2px] flex h-[761px] w-[1428px] flex-col border border-[#23343c] bg-[#63cdef]">
        <TitleBar />
        <div className="mr-[7px] ml-[7px] flex flex-1 flex-col">
          <NavBar />
          <MenuBar />
          <div className="flex h-[642px] bg-[#e5e5e5] pt-px pl-px">
            <Connections />
            <Workspace />
            <Actions />
          </div>
          <StatusBar />
          <div className="h-px bg-[#86aebf]" />
        </div>
      </div>
      <RedMark />
    </div>
  );
}
